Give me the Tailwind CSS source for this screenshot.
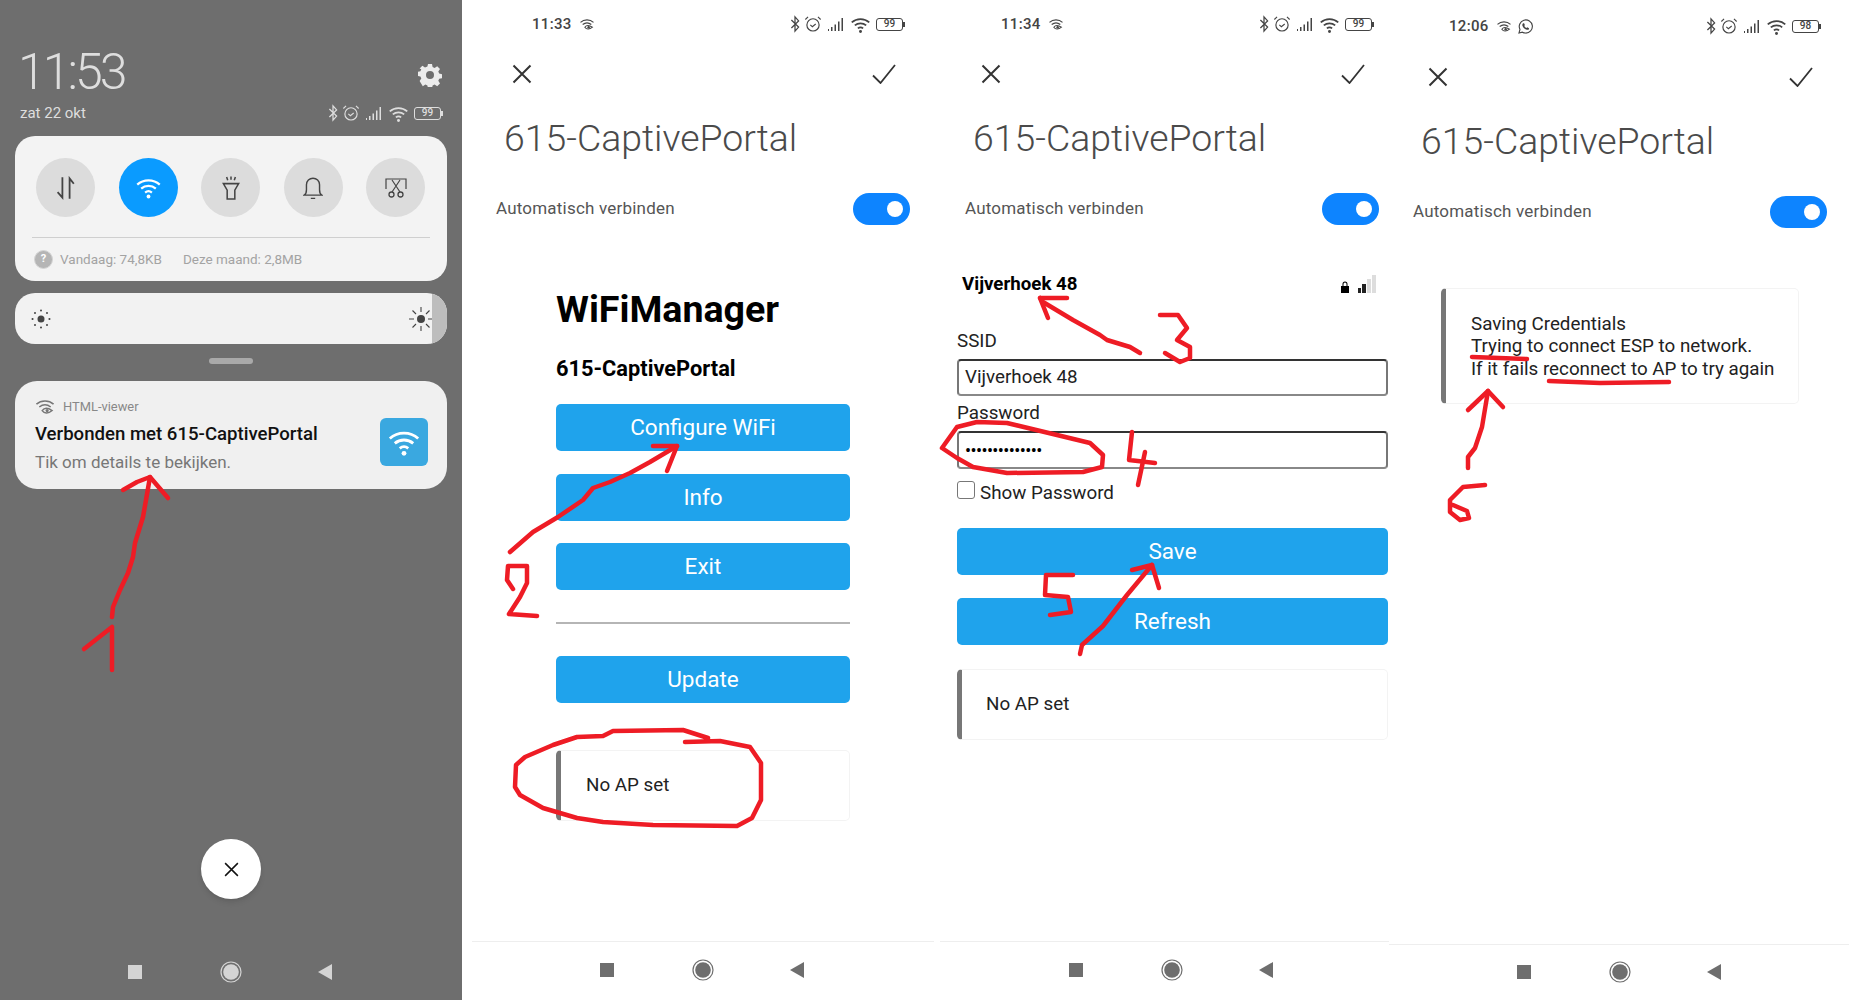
<!DOCTYPE html>
<html lang="en">
<head>
    <meta charset="UTF-8">
    <title>615-CaptivePortal</title>
    <script src="https://cdn.jsdelivr.net/npm/@tailwindcss/browser@4"></script>
</head>
<body class="bg-white font-[Roboto,sans-serif] overflow-hidden">
    <!-- shared icons -->
    <svg class="hidden">
        <symbol id="bt" viewBox="0 0 12 20"><path d="M2 5.500l8 8-4 4.500V2l4 4.500-8 8" fill="none" stroke="currentColor" stroke-width="1.400"/></symbol>
        <symbol id="alarm" viewBox="0 0 20 20"><circle cx="10" cy="11" r="6.800" fill="none" stroke="currentColor" stroke-width="1.300"/><path d="M7 11l2.300 2 3.700-3M1.500 5l3-3M18.500 5l-3-3" fill="none" stroke="currentColor" stroke-width="1.200"/></symbol>
        <symbol id="signal" viewBox="0 0 18 14"><path d="M1 12h1v2H1zM4 10h1.500v4H4zM7.500 7.500H9V14H7.500zM11 4.500h1.500V14H11zM14.500 1H16v13h-1.500z" fill="currentColor"/></symbol>
        <symbol id="wifi" viewBox="0 0 24 24"><path d="M2 9.500c5.600-5 14.400-5 20 0M5.500 13c3.700-3.200 9.300-3.200 13 0M9 16.500c1.800-1.500 4.200-1.500 6 0" fill="none" stroke="currentColor" stroke-width="2"/><circle cx="12" cy="20" r="1.700" fill="currentColor"/></symbol>
        <symbol id="wifieye" viewBox="0 0 14 12"><path d="M1 4c3.300-3 8.700-3 12 0M3 6c2.500-2 5.500-2 8 0" fill="none" stroke="currentColor" stroke-width="1.100"/><path d="M5 8.500c1.500-2 4-2 7 0-3 2.500-5.500 2-7 0z" fill="none" stroke="currentColor" stroke-width="1"/><circle cx="8.500" cy="8.500" r="1.100" fill="currentColor"/></symbol>
        <symbol id="close" viewBox="0 0 20 20"><path d="M1.500 1.500l17 17M18.500 1.500l-17 17" fill="none" stroke="currentColor" stroke-width="2"/></symbol>
        <symbol id="check" viewBox="0 0 24 20"><path d="M1 11.500l7.500 7.500L23 1" fill="none" stroke="currentColor" stroke-width="1.800"/></symbol>
        <symbol id="navsquare" viewBox="0 0 14 14"><rect width="14" height="14" fill="currentColor"/></symbol>
        <symbol id="navcircle" viewBox="0 0 22 22"><circle cx="11" cy="11" r="10" fill="none" stroke="currentColor" stroke-width="1.200"/><circle cx="11" cy="11" r="7.800" fill="currentColor"/></symbol>
        <symbol id="navback" viewBox="0 0 14 16"><path d="M14 0v16L0 8z" fill="currentColor"/></symbol>
    </svg>

    <div class="relative flex w-[1849px] h-[1000px] overflow-hidden">

        <!-- 1: notification shade -->
        <section class="flex flex-col w-[462px] h-full bg-[#6e6e6e] shrink-0 px-[15px]">
            <div class="flex items-end justify-between pl-[3px] pr-[5px] -mr-[10px] pt-[43px]">
                <div class="text-[50px] leading-[58px] font-light text-[#dedede] tracking-[-3px]">11:53</div>
                <svg class="w-[24px] h-[24px] mb-[14px] mr-[10px] text-[#ececec]" viewBox="0 0 24 24"><path fill="currentColor" fill-rule="evenodd" d="M10 1h4l.6 3 2 .9 2.600-1.700 2.800 2.800-1.700 2.600.9 2 3 .6v4l-3 .6-.9 2 1.700 2.600-2.800 2.800-2.600-1.700-2 .9-.6 3h-4l-.6-3-2-.9-2.600 1.700L1.600 18l1.700-2.600-.9-2-3-.6v-4l3-.6.9-2L1.600 5.600 4.400 2.800 7 4.500l2.400-.9zM12 8a4 4 0 100 8 4 4 0 000-8z"/></svg>
            </div>
            <div class="flex items-center justify-between pl-[5px] pr-[4px] h-[22px] mt-[1px] text-[#dedede]">
                <span class="text-[15px]">zat 22 okt</span>
                <div class="flex items-center">
                    <svg class="w-[12px] h-[18px]"><use href="#bt"/></svg>
                    <svg class="w-[18px] h-[18px] ml-[3px]"><use href="#alarm"/></svg>
                    <svg class="w-[18px] h-[14px] ml-[5px]"><use href="#signal"/></svg>
                    <svg class="w-[21px] h-[21px] ml-[5px]"><use href="#wifi"/></svg>
                    <div class="flex items-center ml-[5px]">
                        <div class="flex items-center justify-center w-[27px] h-[13px] border-[1.5px] border-[#dedede] rounded-[3px] text-[10px] font-medium leading-none">99</div>
                        <div class="w-[2px] h-[5px] bg-[#dedede]"></div>
                    </div>
                </div>
            </div>
            <div class="h-[145px] mt-[12px] bg-[#f3f3f3] rounded-[20px] px-[17px]">
                <div class="flex justify-between pl-[4px] pr-[5px] pt-[22px]">
                    <div class="flex items-center justify-center w-[59px] h-[59px] rounded-full bg-[#dcdcdc] text-[#444]">
                        <svg class="w-[20px] h-[24px]" viewBox="0 0 16 20"><path d="M5 1v17L1 13.500M11 19V2l3.500 4.500" fill="none" stroke="currentColor" stroke-width="1.500"/></svg>
                    </div>
                    <div class="flex items-center justify-center w-[59px] h-[59px] rounded-full bg-[#0a9bff] text-white">
                        <svg class="w-[27px] h-[27px]"><use href="#wifi"/></svg>
                    </div>
                    <div class="flex items-center justify-center w-[59px] h-[59px] rounded-full bg-[#dcdcdc] text-[#444]">
                        <svg class="w-[20px] h-[24px]" viewBox="0 0 18 22"><path d="M2 7h14l-3.500 6v8h-7v-8zM5 1l1 3M9 .5v3M13 1l-1 3" fill="none" stroke="currentColor" stroke-width="1.400"/></svg>
                    </div>
                    <div class="flex items-center justify-center w-[59px] h-[59px] rounded-full bg-[#dcdcdc] text-[#444]">
                        <svg class="w-[20px] h-[24px]" viewBox="0 0 18 22"><path d="M1 17.500h16c-1.500-1-2-2.500-2-5V8A6 6 0 003 8v4.500c0 2.500-.5 4-2 5zM7 20.500h4" fill="none" stroke="currentColor" stroke-width="1.300"/></svg>
                    </div>
                    <div class="flex items-center justify-center w-[59px] h-[59px] rounded-full bg-[#dcdcdc] text-[#444]">
                        <svg class="w-[22px] h-[20px]" viewBox="0 0 22 20"><path d="M1 11V1h20v10M7 2l8 12M15 2L7 14" fill="none" stroke="currentColor" stroke-width="1.200"/><circle cx="6.500" cy="16.500" r="2.500" fill="none" stroke="currentColor" stroke-width="1.300"/><circle cx="15.500" cy="16.500" r="2.500" fill="none" stroke="currentColor" stroke-width="1.300"/></svg>
                    </div>
                </div>
                <div class="h-px bg-[#cfcfcf] mt-[20px]"></div>
                <div class="flex items-center h-[42px] pl-[2px] text-[13.500px] text-[#a3a3a3]">
                    <div class="flex items-center justify-center w-[19px] h-[19px] rounded-full bg-[#b5b5b5] border border-[#d5d5d5] text-white text-[11px] font-bold">?</div>
                    <span class="ml-[7px]">Vandaag: 74,8KB</span>
                    <span class="ml-[21px]">Deze maand: 2,8MB</span>
                </div>
            </div>
            <div class="flex items-center justify-between h-[51px] mt-[12px] bg-[#f2f2f2] rounded-[20px] overflow-hidden pl-[16px]">
                <svg class="w-[20px] h-[20px] text-[#444]" viewBox="0 0 20 20"><circle cx="10" cy="10" r="3.500" fill="currentColor"/><path d="M10 1.500v.1M10 18.400v.1M1.500 10h.1M18.400 10h.1M4 4v.1M16 4v.1M4 16v.1M16 16v.1" stroke="currentColor" stroke-width="2" stroke-linecap="round"/></svg>
                <div class="flex items-center h-full">
                    <svg class="w-[24px] h-[24px] text-[#444] mr-[-1px]" viewBox="0 0 24 24"><circle cx="12" cy="12" r="4" fill="currentColor"/><path d="M12 0v5M12 19v5M0 12h5M19 12h5M3.500 3.500L7 7M17 17l3.500 3.500M3.500 20.500L7 17M17 7l3.500-3.500" stroke="currentColor" stroke-width="1.100"/></svg>
                    <div class="w-[15px] h-full bg-[#bdbdbd]"></div>
                </div>
            </div>
            <div class="w-[44px] h-[6px] mx-auto mt-[14px] rounded-full bg-[#a9a9a9]"></div>
            <div class="flex items-center justify-between h-[108px] mt-[17px] bg-[#f0f0f0] rounded-[22px] pl-[20px] pr-[19px]">
                <div class="min-w-0">
                    <div class="flex items-center h-[20px] text-[#888]">
                        <svg class="w-[20px] h-[18px] text-[#777]" viewBox="0 0 14 12"><use href="#wifieye"/></svg>
                        <span class="ml-[8px] text-[12.900px]">HTML-viewer</span>
                    </div>
                    <div class="mt-[4px] text-[18.600px] leading-[26px] font-medium text-[#111]">Verbonden met 615-CaptivePortal</div>
                    <div class="mt-[3px] text-[17px] leading-[24px] text-[#777]">Tik om details te bekijken.</div>
                </div>
                <div class="flex items-center justify-center w-[48px] h-[48px] mt-[14px] rounded-[6px] bg-[#3aa8e0] text-white">
                    <svg class="w-[34px] h-[34px]"><use href="#wifi"/></svg>
                </div>
            </div>
            <div class="mt-auto flex flex-col items-center">
                <div class="flex items-center justify-center w-[60px] h-[60px] rounded-full bg-white shadow-md text-[#111]">
                    <svg class="w-[15px] h-[15px]"><use href="#close"/></svg>
                </div>
                <div class="flex items-center h-[59px] mt-[42px] pt-[2px] pr-[2px] text-[#d4d4d4]">
                    <svg class="w-[14px] h-[14px]"><use href="#navsquare"/></svg>
                    <svg class="w-[22px] h-[22px] ml-[78px]"><use href="#navcircle"/></svg>
                    <svg class="w-[14px] h-[16px] ml-[76px]"><use href="#navback"/></svg>
                </div>
            </div>
        </section>

        <!-- 2: WiFiManager menu -->
        <section class="flex flex-col w-[472px] h-full shrink-0">
            <div class="flex items-center justify-between h-[48px] pl-[70px] pr-[29px] text-[#444]">
                <div class="flex items-center">
                    <span class="text-[15px] font-medium tracking-[0.3px]">11:33</span>
                    <svg class="w-[16px] h-[13px] ml-[7px]"><use href="#wifieye"/></svg>
                </div>
                <div class="flex items-center">
                    <svg class="w-[12px] h-[18px]"><use href="#bt"/></svg>
                    <svg class="w-[18px] h-[18px] ml-[3px]"><use href="#alarm"/></svg>
                    <svg class="w-[18px] h-[14px] ml-[5px]"><use href="#signal"/></svg>
                    <svg class="w-[21px] h-[21px] ml-[5px]"><use href="#wifi"/></svg>
                    <div class="flex items-center ml-[5px]">
                        <div class="flex items-center justify-center w-[27px] h-[13px] border-[1.5px] border-[#444] rounded-[3px] text-[10px] font-medium leading-none">99</div>
                        <div class="w-[2px] h-[5px] bg-[#444]"></div>
                    </div>
                </div>
            </div>
            <div class="flex items-center justify-between h-[52px] pl-[50px] pr-[38px] text-[#333]">
                <svg class="w-[20px] h-[20px]"><use href="#close"/></svg>
                <svg class="w-[24px] h-[20px]"><use href="#check"/></svg>
            </div>
            <div class="mt-[10px] pl-[42px] text-[37.400px] leading-[56px] font-light text-[#4a4a4a]">615-CaptivePortal</div>
            <div class="flex items-center justify-between h-[32px] mt-[27px] pl-[34px] pr-[24px]">
                <span class="text-[17px] text-[#555] tracking-[0.2px]">Automatisch verbinden</span>
                <div class="flex items-center justify-end w-[57px] h-[32px] pr-[7px] rounded-full bg-[#0d84ff]">
                    <div class="w-[16px] h-[16px] rounded-full bg-white"></div>
                </div>
            </div>
            <div class="w-[294px] ml-[94px] mt-[63px] text-black">
                <h1 class="text-[37.600px] leading-[42px] font-bold">WiFiManager</h1>
                <h3 class="mt-[24px] text-[21.800px] leading-[30px] font-bold">615-CaptivePortal</h3>
                <div class="flex items-center justify-center h-[47px] mt-[20px] rounded-[5px] bg-[#1fa3ec] text-white text-[22.500px]">Configure WiFi</div>
                <div class="flex items-center justify-center h-[47px] mt-[23px] rounded-[5px] bg-[#1fa3ec] text-white text-[22.500px]">Info</div>
                <div class="flex items-center justify-center h-[47px] mt-[22px] rounded-[5px] bg-[#1fa3ec] text-white text-[22.500px]">Exit</div>
                <div class="h-[2px] mt-[32px] bg-[#b5b5b5]"></div>
                <div class="flex items-center justify-center h-[47px] mt-[32px] rounded-[5px] bg-[#1fa3ec] text-white text-[22.500px]">Update</div>
                <div class="flex items-center h-[71px] mt-[47px] pl-[25px] border border-[#f3f3f3] border-l-[5px] border-l-[#777] rounded-[5px] text-[18.800px] text-[#222]">No AP set</div>
            </div>
            <div class="flex items-center justify-center h-[59px] mt-auto ml-[10px] pb-[3px] pr-[2px] border-t border-[#eee] text-[#6e6e6e]">
                <svg class="w-[14px] h-[14px]"><use href="#navsquare"/></svg>
                <svg class="w-[22px] h-[22px] ml-[78px]"><use href="#navcircle"/></svg>
                <svg class="w-[14px] h-[16px] ml-[76px]"><use href="#navback"/></svg>
            </div>
        </section>

        <!-- 3: network form -->
        <section class="flex flex-col w-[455px] h-full shrink-0">
            <div class="flex items-center justify-between h-[48px] pl-[67px] pr-[15px] text-[#444]">
                <div class="flex items-center">
                    <span class="text-[15px] font-medium tracking-[0.3px]">11:34</span>
                    <svg class="w-[16px] h-[13px] ml-[7px]"><use href="#wifieye"/></svg>
                </div>
                <div class="flex items-center">
                    <svg class="w-[12px] h-[18px]"><use href="#bt"/></svg>
                    <svg class="w-[18px] h-[18px] ml-[3px]"><use href="#alarm"/></svg>
                    <svg class="w-[18px] h-[14px] ml-[5px]"><use href="#signal"/></svg>
                    <svg class="w-[21px] h-[21px] ml-[5px]"><use href="#wifi"/></svg>
                    <div class="flex items-center ml-[5px]">
                        <div class="flex items-center justify-center w-[27px] h-[13px] border-[1.5px] border-[#444] rounded-[3px] text-[10px] font-medium leading-none">99</div>
                        <div class="w-[2px] h-[5px] bg-[#444]"></div>
                    </div>
                </div>
            </div>
            <div class="flex items-center justify-between h-[52px] pl-[47px] pr-[24px] text-[#333]">
                <svg class="w-[20px] h-[20px]"><use href="#close"/></svg>
                <svg class="w-[24px] h-[20px]"><use href="#check"/></svg>
            </div>
            <div class="mt-[10px] pl-[39px] text-[37.400px] leading-[56px] font-light text-[#4a4a4a]">615-CaptivePortal</div>
            <div class="flex items-center justify-between h-[32px] mt-[27px] pl-[31px] pr-[10px]">
                <span class="text-[17px] text-[#555] tracking-[0.2px]">Automatisch verbinden</span>
                <div class="flex items-center justify-end w-[57px] h-[32px] pr-[7px] rounded-full bg-[#0d84ff]">
                    <div class="w-[16px] h-[16px] rounded-full bg-white"></div>
                </div>
            </div>
            <div class="flex items-center justify-between h-[24px] mt-[47px] pl-[28px] pr-[13px]">
                <span class="text-[18.700px] font-bold text-black">Vijverhoek 48</span>
                <div class="flex items-end">
                    <svg class="w-[10px] h-[12px] text-black" viewBox="0 0 10 12"><path fill="currentColor" d="M1 5h8v7H1zM2.500 5V3a2.500 2.500 0 015 0v2H6.500V3a1.500 1.500 0 00-3 0v2z"/></svg>
                    <div class="flex items-end gap-[1px] ml-[8px]">
                        <div class="w-[3px] h-[5px] bg-[#222]"></div>
                        <div class="w-[4px] h-[9px] bg-[#222]"></div>
                        <div class="w-[4px] h-[14px] bg-[#ddd]"></div>
                        <div class="w-[4px] h-[18px] bg-[#ddd]"></div>
                    </div>
                </div>
            </div>
            <div class="w-[431px] ml-[23px] mt-[33px] text-[#222] text-[18.800px]">
                <div class="leading-[24px]">SSID</div>
                <div class="flex items-center h-[37px] mt-[6px] pl-[6px] border-2 border-x-[#777] border-t-[#333] border-b-[#888] rounded-[4px]">Vijverhoek 48</div>
                <div class="leading-[24px] mt-[5px]">Password</div>
                <div class="flex items-center h-[38px] mt-[6px] pl-[6px] border-2 border-x-[#777] border-t-[#333] border-b-[#888] rounded-[4px] text-[18px] tracking-[-0.600px] text-black">••••••••••••••</div>
                <div class="flex items-center h-[24px] mt-[12px]">
                    <div class="w-[18px] h-[18px] mb-[7px] border border-[#777] rounded-[3px]"></div>
                    <span class="ml-[5px]">Show Password</span>
                </div>
                <div class="flex items-center justify-center h-[47px] mt-[23px] rounded-[5px] bg-[#1fa3ec] text-white text-[22.500px]">Save</div>
                <div class="flex items-center justify-center h-[47px] mt-[23px] rounded-[5px] bg-[#1fa3ec] text-white text-[22.500px]">Refresh</div>
                <div class="flex items-center h-[71px] mt-[24px] pl-[24px] border border-[#f3f3f3] border-l-[5px] border-l-[#777] rounded-[5px]">No AP set</div>
            </div>
            <div class="flex items-center justify-center h-[59px] mt-auto ml-[6px] pl-[12px] pb-[3px] border-t border-[#eee] text-[#6e6e6e]">
                <svg class="w-[14px] h-[14px]"><use href="#navsquare"/></svg>
                <svg class="w-[22px] h-[22px] ml-[78px]"><use href="#navcircle"/></svg>
                <svg class="w-[14px] h-[16px] ml-[76px]"><use href="#navback"/></svg>
            </div>
        </section>

        <!-- 4: saving credentials -->
        <section class="flex flex-col w-[460px] h-full shrink-0">
            <div class="flex items-center justify-between h-[52px] pl-[60px] pr-[28px] text-[#444]">
                <div class="flex items-center">
                    <span class="text-[15px] font-medium tracking-[0.3px]">12:06</span>
                    <svg class="w-[16px] h-[13px] ml-[7px]"><use href="#wifieye"/></svg>
                    <svg class="w-[15px] h-[15px] ml-[6px]" viewBox="0 0 16 16"><path d="M1 15l1.100-3.800A7 7 0 118 15a7 7 0 01-3.300-.9z" fill="none" stroke="currentColor" stroke-width="1.200"/><path d="M5.500 4.500l1 .1.800 1.900-.6.900c.5 1 1.300 1.700 2.300 2.200l.9-.7 1.800.9v1c-.8.800-2 .8-3 .4-2-.8-3.400-2.300-4-4-.2-1 0-2 .8-2.700z" fill="currentColor"/></svg>
                </div>
                <div class="flex items-center">
                    <svg class="w-[12px] h-[18px]"><use href="#bt"/></svg>
                    <svg class="w-[18px] h-[18px] ml-[3px]"><use href="#alarm"/></svg>
                    <svg class="w-[18px] h-[14px] ml-[5px]"><use href="#signal"/></svg>
                    <svg class="w-[21px] h-[21px] ml-[5px]"><use href="#wifi"/></svg>
                    <div class="flex items-center ml-[5px]">
                        <div class="flex items-center justify-center w-[27px] h-[13px] border-[1.5px] border-[#444] rounded-[3px] text-[10px] font-medium leading-none">98</div>
                        <div class="w-[2px] h-[5px] bg-[#444]"></div>
                    </div>
                </div>
            </div>
            <div class="flex items-center justify-between h-[50px] pl-[39px] pr-[36px] text-[#333]">
                <svg class="w-[20px] h-[20px]"><use href="#close"/></svg>
                <svg class="w-[24px] h-[20px]"><use href="#check"/></svg>
            </div>
            <div class="mt-[11px] pl-[32px] text-[37.400px] leading-[56px] font-light text-[#4a4a4a]">615-CaptivePortal</div>
            <div class="flex items-center justify-between h-[32px] mt-[27px] pl-[24px] pr-[22px]">
                <span class="text-[17px] text-[#555] tracking-[0.2px]">Automatisch verbinden</span>
                <div class="flex items-center justify-end w-[57px] h-[32px] pr-[7px] rounded-full bg-[#0d84ff]">
                    <div class="w-[16px] h-[16px] rounded-full bg-white"></div>
                </div>
            </div>
            <div class="flex items-center w-[358px] h-[116px] mt-[60px] ml-[52px] pl-[25px] pt-[1px] border border-[#f3f3f3] border-l-[5px] border-l-[#777] rounded-[5px] text-[18.800px] leading-[22.500px] text-[#222]">
                <p>Saving Credentials<br>Trying to connect ESP to network.<br>If it fails reconnect to AP to try again</p>
            </div>
            <div class="flex items-center justify-center h-[56px] mt-auto pb-[2px] pr-[1px] border-t border-[#eee] text-[#6e6e6e]">
                <svg class="w-[14px] h-[14px]"><use href="#navsquare"/></svg>
                <svg class="w-[22px] h-[22px] ml-[78px]"><use href="#navcircle"/></svg>
                <svg class="w-[14px] h-[16px] ml-[76px]"><use href="#navback"/></svg>
            </div>
        </section>

        <!-- red pen scribbles on top of the screenshots -->
        <svg class="absolute inset-0 w-[1849px] h-[1000px] pointer-events-none" viewBox="0 0 1849 1000" fill="none" stroke="#ee1c25" stroke-width="4.500" stroke-linecap="round" stroke-linejoin="round">
            <polyline points="112,617 113,607 120,590 128,573 133,557 135,543 143,517 146,500 150,477"/>
            <polyline points="123,490 137,482 150,477 168,498"/>
            <polyline points="84,649 112,627 112,670"/>
            <polyline points="510,552 533,532 558,517 583,500 593,488 610,482 630,473 650,462 677,446"/>
            <polyline points="653,446 677,446 667,471"/>
            <polyline points="513,589 507,580 508,566 527,566 527,583 520,597 509,614 537,616"/>
            <polyline points="685,742 720,741 750,747 761,763 761,800 752,818 737,826 653,825 603,822 577,818 543,808 520,795 515,787 516,765 525,757 553,745 577,737 603,736 613,731 683,730 708,738"/>
            <polyline points="1140,353 1130,347 1107,340 1100,335 1073,320 1043,302 1040,298"/>
            <polyline points="1067,298 1040,298 1048,318"/>
            <polyline points="1160,315 1178,315 1187,328 1177,340 1190,347 1190,358 1180,362 1165,353"/>
            <polyline points="942,448 957,427 977,422 1007,423 1057,435 1090,443 1103,455 1102,467 1083,472 1007,473 973,467 957,458 942,448"/>
            <polyline points="1132,432 1129,460 1155,463"/>
            <polyline points="1145,452 1138,485"/>
            <polyline points="1073,575 1046,575 1045,595 1068,597 1071,612 1050,615"/>
            <polyline points="1080,654 1082,645 1103,626 1127,595 1152,565"/>
            <polyline points="1132,570 1152,565 1159,588"/>
            <polyline points="1468,468 1468,457 1475,448 1482,427 1488,391"/>
            <polyline points="1468,410 1488,391 1503,407"/>
            <polyline points="1485,485 1463,487 1450,500 1450,512 1460,520 1469,518 1467,511 1453,505"/>
            <polyline points="1472,357 1527,359"/>
            <polyline points="1549,381 1600,383 1669,382"/>
        </svg>
    </div>
</body>
</html>
